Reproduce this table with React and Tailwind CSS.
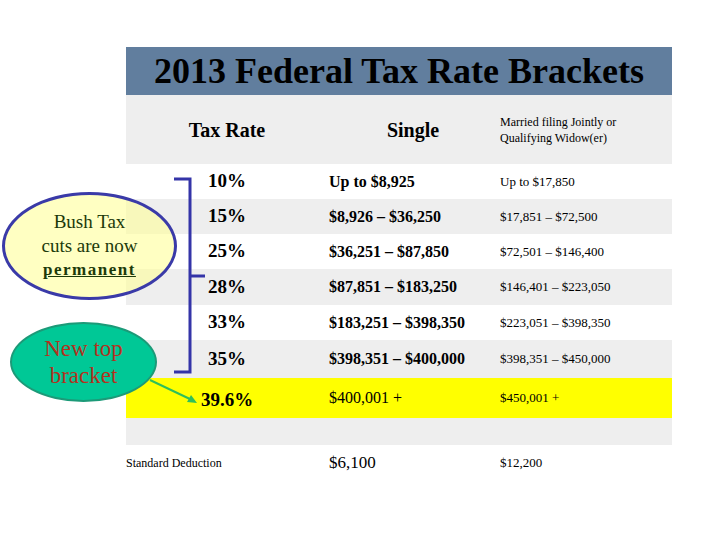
const rows = [
  { rate: '10%', single: 'Up to $8,925', married: 'Up to $17,850', h: 'h-[35px]', bg: 'bg-white' },
  { rate: '15%', single: '$8,926 – $36,250', married: '$17,851 – $72,500', h: 'h-[35px]', bg: 'bg-[#eeeeee]' },
  { rate: '25%', single: '$36,251 – $87,850', married: '$72,501 – $146,400', h: 'h-[35px]', bg: 'bg-white' },
  { rate: '28%', single: '$87,851 – $183,250', married: '$146,401 – $223,050', h: 'h-[36px]', bg: 'bg-[#eeeeee]' },
  { rate: '33%', single: '$183,251 – $398,350', married: '$223,051 – $398,350', h: 'h-[35px]', bg: 'bg-white' },
  { rate: '35%', single: '$398,351 – $400,000', married: '$398,351 – $450,000', h: 'h-[38px]', bg: 'bg-[#eeeeee]' },
]

function Row({ row }) {
  return (
    <div className={`grid grid-cols-[202px_170px_174px] items-center ${row.h} ${row.bg}`}>
      <span className="text-center text-[19px] font-bold">{row.rate}</span>
      <span className="pl-px text-[16px] font-bold">{row.single}</span>
      <span className="pl-[2px] text-[13px]">{row.married}</span>
    </div>
  )
}

export default function App() {
  return (
    <div className="relative h-[540px] w-[720px] overflow-hidden bg-white text-black [font-family:'Liberation_Serif',serif]">
      <div className="ml-[126px] w-[546px] pt-[47px]">
        <div className="flex h-[48px] items-center justify-center bg-[#617e9e]">
          <h1 className="text-[36px] font-bold leading-none">2013 Federal Tax Rate Brackets</h1>
        </div>
        <div className="grid h-[69px] grid-cols-[202px_170px_174px] items-center bg-[#eeeeee]">
          <span className="text-center text-[20px] font-bold">Tax Rate</span>
          <span className="text-center text-[20px] font-bold">Single</span>
          <span className="pl-[2px] text-[12px] leading-[16px]">
            Married filing Jointly or
            <br />
            Qualifying Widow(er)
          </span>
        </div>
        {rows.map((r) => (
          <Row key={r.rate} row={r} />
        ))}
        <div className="grid h-[40px] grid-cols-[202px_170px_174px] items-center bg-[#ffff00]">
          <span className="pt-[5px] text-center text-[19px] font-bold">39.6%</span>
          <span className="pl-px text-[16px]">$400,001 +</span>
          <span className="pl-[2px] text-[13px]">$450,001 +</span>
        </div>
        <div className="h-[27px] bg-[#eeeeee]" />
        <div className="grid h-[35px] grid-cols-[202px_170px_174px] items-center bg-white">
          <span className="text-[12px]">Standard Deduction</span>
          <span className="pl-px text-[17px]">$6,100</span>
          <span className="pl-[2px] text-[13px]">$12,200</span>
        </div>
      </div>

      <svg className="absolute left-0 top-0" width="720" height="540" viewBox="0 0 720 540">
        <path d="M174 179 H190 V372 H174 M190 276 H205" fill="none" stroke="#3434a8" strokeWidth="3" />
        <line x1="150" y1="380" x2="192" y2="400" stroke="#2fbf5a" strokeWidth="2" />
        <path d="M197 403 L187 402 L191 395 Z" fill="#2fbf5a" />
      </svg>

      <div className="absolute left-[2px] top-[192px] flex h-[108px] w-[175px] flex-col items-center justify-center rounded-[50%] border-[3px] border-[#3a3aa8] bg-[#ffff99]/60 text-center text-[19px] leading-[24px] text-[#1c3a0a]">
        <span>Bush Tax</span>
        <span>cuts are now</span>
        <span className="text-[17px] font-bold tracking-[1.5px] underline">permanent</span>
      </div>

      <div className="absolute left-[10px] top-[322px] flex h-[80px] w-[147px] flex-col items-center justify-center rounded-[50%] border-2 border-[#1c9a78] bg-[#00c896] text-center text-[23px] leading-[27px] text-[#b3321e]">
        <span>New top</span>
        <span>bracket</span>
      </div>
    </div>
  )
}
